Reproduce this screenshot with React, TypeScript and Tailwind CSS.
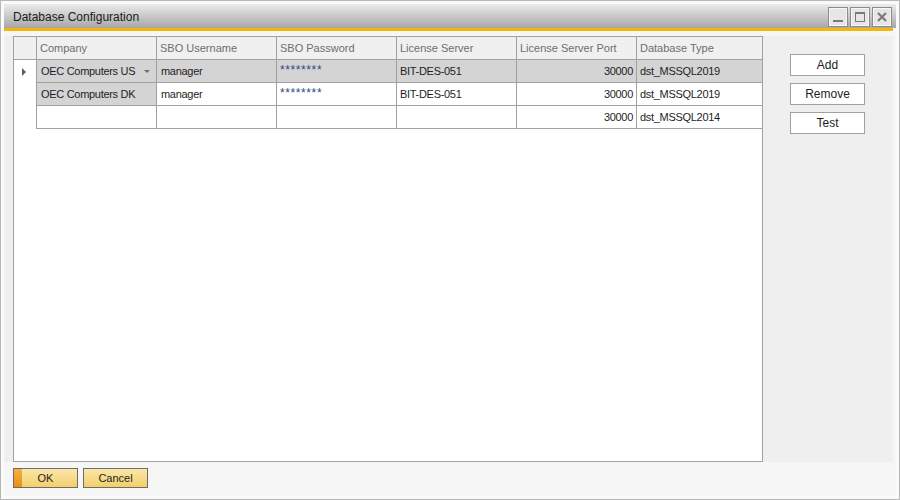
import { useState } from 'react';

const columns = [
  { key: 'company', label: 'Company', width: 'w-[120px]' },
  { key: 'user', label: 'SBO Username', width: 'w-[120px]' },
  { key: 'password', label: 'SBO Password', width: 'w-[120px]' },
  { key: 'server', label: 'License Server', width: 'w-[120px]' },
  { key: 'port', label: 'License Server Port', width: 'w-[120px]' },
  { key: 'dbType', label: 'Database Type', width: 'flex-1' },
];

type Row = {
  company: string;
  user: string;
  password: string;
  server: string;
  port: string;
  dbType: string;
  locked: boolean;
};

const rows: Row[] = [
  { company: 'OEC Computers US', user: 'manager', password: '********', server: 'BIT-DES-051', port: '30000', dbType: 'dst_MSSQL2019', locked: true },
  { company: 'OEC Computers DK', user: 'manager', password: '********', server: 'BIT-DES-051', port: '30000', dbType: 'dst_MSSQL2019', locked: true },
  { company: '', user: '', password: '', server: '', port: '30000', dbType: 'dst_MSSQL2014', locked: false },
];

function WindowButton({ kind }: { kind: 'min' | 'max' | 'close' }) {
  return (
    <div className="w-[20px] h-[20px] border border-[#8c8c8c] bg-[#e6e6e6] shadow-[inset_0_0_0_1px_#f6f6f6] flex items-center justify-center">
      <svg width="14" height="14" viewBox="0 0 14 14">
        {kind === 'min' && <rect x="2" y="10" width="10" height="2" fill="#7a7a7a" />}
        {kind === 'max' && (
          <>
            <rect x="2.5" y="2.5" width="9" height="9" fill="none" stroke="#7a7a7a" strokeWidth="1" />
            <rect x="2" y="2" width="10" height="2" fill="#7a7a7a" />
          </>
        )}
        {kind === 'close' && <path d="M3 3 L11 11 M11 3 L3 11" stroke="#7a7a7a" strokeWidth="2.2" />}
      </svg>
    </div>
  );
}

function SideButton({ label }: { label: string }) {
  return (
    <button className="w-[75px] h-[22px] border border-[#a0a0a0] bg-white text-[12px] text-[#1e1e1e] leading-none">
      {label}
    </button>
  );
}

export default function App() {
  const [selected] = useState(0);

  return (
    <div
      className="w-[900px] h-[500px] border border-[#b7b7b7] bg-[#fafafa] p-[3px] flex flex-col"
      style={{ fontFamily: '"Liberation Sans", Arial, sans-serif' }}
    >
      {/* title bar */}
      <div className="h-[24px] bg-gradient-to-b from-[#ececec] to-[#a7a7a7] flex items-center pl-[9px] pr-[4px]">
        <span className="text-[12px] text-[#1a1a1a] flex-1 pt-[1px]">Database Configuration</span>
        <div className="flex gap-[2px] mt-[1px]">
          <WindowButton kind="min" />
          <WindowButton kind="max" />
          <WindowButton kind="close" />
        </div>
      </div>
      <div className="h-[3px] bg-[#f5b50f] mr-[3px]" />

      <div className="flex-1 flex flex-col bg-[#f6f6f6] pt-[5px] pr-[3px] pb-[5px]">
        <div className="h-[426px] flex bg-[#efefef] pl-[9px]">
          {/* grid */}
          <div className="w-[750px] h-full border border-[#a0a0a0] bg-white flex flex-col text-[11px]">
            <div className="flex h-[23px] border-b border-[#a0a0a0] bg-[#f0f0f0] text-[#6e6e6e]">
              <div className="w-[23px] border-r border-[#a0a0a0]" />
              {columns.map((c, i) => (
                <div
                  key={c.key}
                  className={`${c.width} flex items-center pl-[3px] whitespace-nowrap ${i < columns.length - 1 ? 'border-r border-[#a0a0a0]' : ''}`}
                >
                  {c.label}
                </div>
              ))}
            </div>
            {rows.map((r, ri) => {
              const isSel = ri === selected;
              return (
                <div key={ri} className="flex h-[23px] text-[#1e1e1e]">
                  <div className="w-[23px] border-r border-[#a0a0a0] flex items-center justify-center">
                    {isSel && (
                      <svg width="6" height="8" viewBox="0 0 6 8" className="ml-[-2px]">
                        <path d="M1 0 L5 4 L1 8 Z" fill="#5f5f5f" />
                      </svg>
                    )}
                  </div>
                  {columns.map((c, i) => {
                    const gray = isSel || (c.key === 'company' && r.locked);
                    const value = r[c.key as keyof Row] as string;
                    return (
                      <div
                        key={c.key}
                        className={`${c.width} border-b border-[#a0a0a0] flex px-[3px] whitespace-nowrap ${
                          i < columns.length - 1 ? 'border-r' : ''
                        } ${gray ? 'bg-[#d4d4d4]' : 'bg-white'} ${
                          c.key === 'password'
                            ? 'items-start pt-[1px] text-[12px] tracking-[0.6px] text-[#2a4d7c]'
                            : 'items-center tracking-[-0.3px]'
                        } ${c.key === 'port' ? 'justify-end' : ''}`}
                      >
                        <span className={`shrink-0 ${c.key === 'company' || c.key === 'user' ? 'pl-[1px]' : ''}`}>{value}</span>
                        {c.key === 'company' && isSel && (
                          <svg width="6" height="3" viewBox="0 0 6 3" className="ml-auto mr-[3px]">
                            <path d="M0 0 H6 L3 3 Z" fill="#6e6e6e" />
                          </svg>
                        )}
                      </div>
                    );
                  })}
                </div>
              );
            })}
          </div>

          {/* side buttons */}
          <div className="flex-1 flex flex-col gap-[7px] pt-[18px] pl-[27px]">
            <SideButton label="Add" />
            <SideButton label="Remove" />
            <SideButton label="Test" />
          </div>
        </div>

        {/* footer */}
        <div className="flex gap-[5px] pl-[9px] pt-[6px]">
          <button className="relative w-[65px] h-[20px] border border-[#6c6c6c] bg-gradient-to-b from-[#fbe7aa] to-[#f2cf68] text-[11px] text-[#1e1e1e] leading-none overflow-hidden">
            <span className="absolute left-0 top-0 bottom-0 w-[8px] bg-gradient-to-b from-[#f5b040] to-[#ec8e10]" />
            OK
          </button>
          <button className="w-[65px] h-[20px] border border-[#6c6c6c] bg-gradient-to-b from-[#fbe7aa] to-[#f2cf68] text-[11px] text-[#1e1e1e] leading-none">
            Cancel
          </button>
        </div>
      </div>
    </div>
  );
}
